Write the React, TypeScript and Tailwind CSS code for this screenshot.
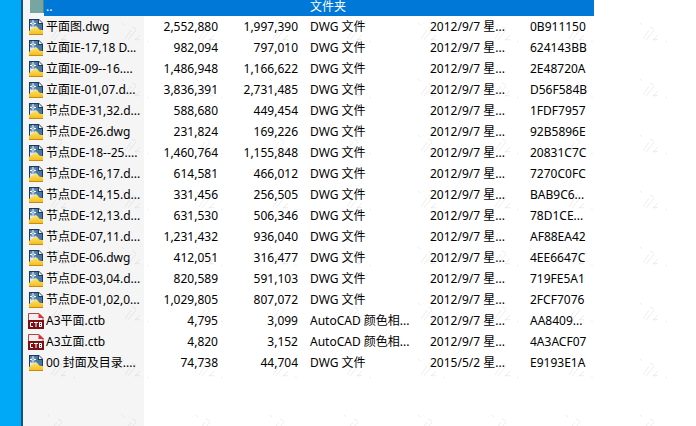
import React from "react";

type Kind = "dwg" | "ctb";
type Row = [string, string, string, string, string, Kind];

const DWG = "DWG 文件";
const CTB = "AutoCAD 颜色相...";
const D12 = "2012/9/7 星...";

const rows: Row[] = [
  ["平面图.dwg", "2,552,880", "1,997,390", D12, "0B911150", "dwg"],
  ["立面IE-17,18 D...", "982,094", "797,010", D12, "624143BB", "dwg"],
  ["立面IE-09--16....", "1,486,948", "1,166,622", D12, "2E48720A", "dwg"],
  ["立面IE-01,07.d...", "3,836,391", "2,731,485", D12, "D56F584B", "dwg"],
  ["节点DE-31,32.d...", "588,680", "449,454", D12, "1FDF7957", "dwg"],
  ["节点DE-26.dwg", "231,824", "169,226", D12, "92B5896E", "dwg"],
  ["节点DE-18--25....", "1,460,764", "1,155,848", D12, "20831C7C", "dwg"],
  ["节点DE-16,17.d...", "614,581", "466,012", D12, "7270C0FC", "dwg"],
  ["节点DE-14,15.d...", "331,456", "256,505", D12, "BAB9C6...", "dwg"],
  ["节点DE-12,13.d...", "631,530", "506,346", D12, "78D1CE...", "dwg"],
  ["节点DE-07,11.d...", "1,231,432", "936,040", D12, "AF88EA42", "dwg"],
  ["节点DE-06.dwg", "412,051", "316,477", D12, "4EE6647C", "dwg"],
  ["节点DE-03,04.d...", "820,589", "591,103", D12, "719FE5A1", "dwg"],
  ["节点DE-01,02,0...", "1,029,805", "807,072", D12, "2FCF7076", "dwg"],
  ["A3平面.ctb", "4,795", "3,099", D12, "AA8409...", "ctb"],
  ["A3立面.ctb", "4,820", "3,152", D12, "4A3ACF07", "ctb"],
  ["00 封面及目录....", "74,738", "44,704", "2015/5/2 星...", "E9193E1A", "dwg"],
];

function DwgIcon() {
  return (
    <svg viewBox="0 0 16 16" className="h-4 w-4 shrink-0" aria-hidden="true">
      <defs>
        <linearGradient id="gold" x2="0" y2="1">
          <stop stopColor="#ffe45a" />
          <stop offset="1" stopColor="#f2b81c" />
        </linearGradient>
      </defs>
      <path d="M1 0h10l4 4v12H1z" fill="#1c3a5e" />
      <path d="M2 1h8v4h4v6H2z" fill="#4a76a2" />
      <path d="M2 7l3 1 3-1 2 2h-3l-5 4z" fill="#dce9f1" />
      <path d="M1 12l6-4h2l3 3h3v5H1z" fill="url(#gold)" />
      <path d="M1 15h14v1H1z" fill="#c88a12" />
      <path d="M11 1v3h3z" fill="#fff" />
      <path d="M5 1v7M2 4.500h6" stroke="#fff" strokeWidth="1" />
      <path d="M3 2.500l4 4M7 2.500l-4 4" stroke="#cfe6f5" strokeWidth=".8" />
      <path d="M4.500 4h1v1h-1z" fill="#3d6e9e" />
    </svg>
  );
}

function CtbIcon() {
  return (
    <svg viewBox="0 0 16 16" className="h-4 w-4 shrink-0" aria-hidden="true">
      <path d="M.5 8V.5H11l4 4V8" fill="#f3eeee" stroke="#a8464a" />
      <path d="M10.500 0L16 5h-5.500z" fill="#dc3038" />
      <path d="M0 7h16v9H0z" fill="#7c1014" />
      <path
        d="M5 9.500H2.500v4H5M6 9.500h4M8 9.500V14M11.500 9v5M11 9.500h2.500v4H11M11 11.500h3"
        fill="none"
        stroke="#fff"
      />
    </svg>
  );
}

function Watermark() {
  return (
    <svg className="pointer-events-none absolute inset-0 h-full w-full" aria-hidden="true">
      <defs>
        <pattern id="marks" width="74" height="56" x="44" y="19" patternUnits="userSpaceOnUse">
          <path
            d="M4 4l2 2M7 20l6-9M10 21l8-10M14 8l4 2M22 16l-5 5q4-1 5 0M29 22l2 1"
            fill="none"
            stroke="#999"
            strokeOpacity=".25"
            strokeWidth=".7"
          />
        </pattern>
      </defs>
      <rect width="100%" height="100%" fill="url(#marks)" />
    </svg>
  );
}

export default function App() {
  return (
    <div className="relative flex h-screen overflow-hidden bg-white font-['Noto_Sans','Noto_Sans_CJK_SC',sans-serif] text-xs text-black">
      <aside className="w-[23px] shrink-0 border-r-2 border-[#17517a] bg-[#00a8f8]" />
      <main className="flex grow">
        <div className="h-full grow bg-linear-to-r from-[#f5f5f5] from-[121px] to-white to-[121px] pl-[5px]">
          <table className="w-[566px] table-fixed border-collapse whitespace-nowrap">
            <colgroup>
              <col className="w-[116px]" />
              <col className="w-[74px]" />
              <col className="w-20" />
              <col className="w-[132px]" />
              <col className="w-[100px]" />
              <col className="w-16" />
            </colgroup>
            <tbody>
              <tr className="h-4 text-white">
                <td className="p-0">
                  <div className="flex h-4">
                    <span className="h-4 w-4 shrink-0 pl-0.5">
                      <span className="block h-[13px] border-r border-[#4f8585] bg-[#76a5a2]" />
                    </span>
                    <span className="h-4 grow bg-[#0078d7] pl-0.5 leading-[14px]">..</span>
                  </div>
                </td>
                <td className="bg-[#0078d7] p-0" />
                <td className="bg-[#0078d7] p-0" />
                <td className="bg-[#0078d7] p-0 pl-3 align-top leading-[14px]">文件夹</td>
                <td className="bg-[#0078d7] p-0" />
                <td className="bg-[#0078d7] p-0" />
              </tr>
              {rows.map(([name, size, packed, date, crc, kind]) => (
                <tr key={name} className="h-[21px]">
                  <td className="p-0">
                    <div className="flex items-center gap-0.5">
                      {kind === "dwg" ? <DwgIcon /> : <CtbIcon />}
                      <span>{name}</span>
                    </div>
                  </td>
                  <td className="p-0 text-right">{size}</td>
                  <td className="p-0 text-right">{packed}</td>
                  <td className="p-0 pl-3">{kind === "dwg" ? DWG : CTB}</td>
                  <td className="p-0">{date}</td>
                  <td className="p-0">{crc}</td>
                </tr>
              ))}
            </tbody>
          </table>
        </div>
      </main>
      <Watermark />
    </div>
  );
}
